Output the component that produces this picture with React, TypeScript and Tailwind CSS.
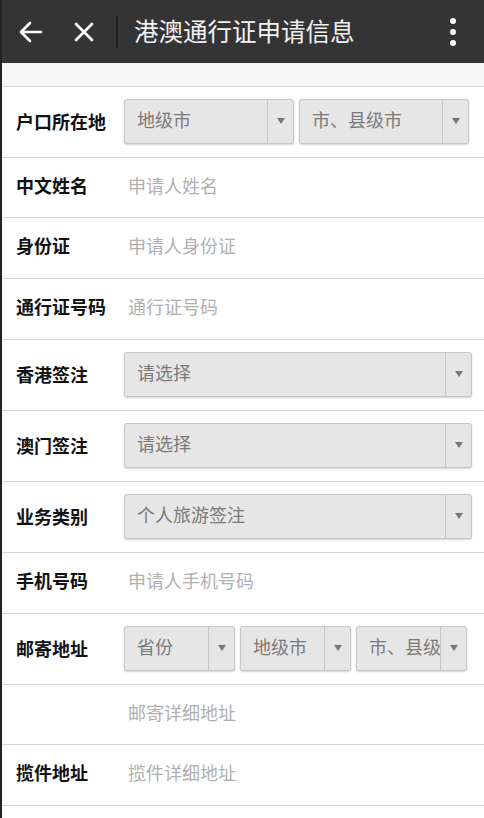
const font = { fontFamily: '"Noto Sans CJK SC", "Noto Sans", sans-serif' };

function Arrow() {
  return (
    <svg width="8" height="6" viewBox="0 0 8 6">
      <path d="M0 0 H8 L4 6 Z" fill="#777" />
    </svg>
  );
}

function Select({ text, className }: { text: string; className: string }) {
  return (
    <div
      className={`flex h-[45px] items-stretch overflow-hidden rounded-[3px] border border-[#c6c6c6] bg-[#e6e6e6] shadow-[0_1px_2px_rgba(0,0,0,0.18)] ${className}`}
    >
      <div className="flex flex-1 items-center overflow-hidden whitespace-nowrap pb-[3px] pl-3 text-[18px] text-[#7a7a7a]">
        {text}
      </div>
      <div className="flex w-[26px] shrink-0 items-center justify-center border-l border-[#c6c6c6]">
        <Arrow />
      </div>
    </div>
  );
}

function Label({ children }: { children?: string }) {
  return <div className="w-[110px] shrink-0 text-[18px] font-bold text-[#111]">{children}</div>;
}

function TextRow({ label, placeholder, short }: { label?: string; placeholder: string; short?: boolean }) {
  return (
    <div
      className={`flex items-center border-b border-[#d6d6d6] pb-[5px] pl-[14px] ${short ? "h-[60px]" : "h-[61px]"}`}
    >
      <Label>{label}</Label>
      <div className="ml-[2px] text-[18px] text-[#b0b0b0]">{placeholder}</div>
    </div>
  );
}

function SelectRow({ label, children }: { label: string; children: React.ReactNode }) {
  return (
    <div className="flex h-[71px] items-center border-b border-[#d6d6d6] pb-[2px] pl-[14px]">
      <Label>{label}</Label>
      <div className="-ml-[2px] flex gap-[5px]">{children}</div>
    </div>
  );
}

export default function App() {
  return (
    <div className="h-[818px] w-[484px] overflow-hidden border-l-2 border-[#222] bg-white" style={font}>
      <header className="flex h-[63px] items-center bg-[#343434] text-white">
        <div className="flex w-[41px] justify-end">
          <svg width="24" height="22" viewBox="0 0 24 22" fill="none" stroke="white" strokeWidth="2.6" strokeLinecap="round" strokeLinejoin="round">
            <path d="M22 11H3M11 2 2 11l9 9" />
          </svg>
        </div>
        <div className="ml-[31px] flex w-[20px] justify-center">
          <svg width="20" height="20" viewBox="0 0 20 20" stroke="white" strokeWidth="2.6" strokeLinecap="round">
            <path d="M2 2l16 16M18 2 2 18" />
          </svg>
        </div>
        <div className="ml-[22px] h-[32px] w-[2px] bg-[#1f1f1f]" />
        <div className="ml-[16px] flex-1 text-[24.5px] text-[#f2f2f2]">港澳通行证申请信息</div>
        <div className="mr-[28px] flex flex-col gap-[5px]">
          <div className="h-[6px] w-[6px] rounded-full bg-white" />
          <div className="h-[6px] w-[6px] rounded-full bg-white" />
          <div className="h-[6px] w-[6px] rounded-full bg-white" />
        </div>
      </header>
      <div className="h-[24px] border-b border-[#d6d6d6] bg-[#f6f6f6]" />
      <SelectRow label="户口所在地">
        <Select text="地级市" className="w-[170px]" />
        <Select text="市、县级市" className="w-[170px]" />
      </SelectRow>
      <TextRow label="中文姓名" placeholder="申请人姓名" short />
      <TextRow label="身份证" placeholder="申请人身份证" />
      <TextRow label="通行证号码" placeholder="通行证号码" />
      <SelectRow label="香港签注">
        <Select text="请选择" className="w-[348px]" />
      </SelectRow>
      <SelectRow label="澳门签注">
        <Select text="请选择" className="w-[348px]" />
      </SelectRow>
      <SelectRow label="业务类别">
        <Select text="个人旅游签注" className="w-[348px]" />
      </SelectRow>
      <TextRow label="手机号码" placeholder="申请人手机号码" />
      <SelectRow label="邮寄地址">
        <Select text="省份" className="w-[111px]" />
        <Select text="地级市" className="w-[111px]" />
        <Select text="市、县级市" className="w-[111px]" />
      </SelectRow>
      <TextRow placeholder="邮寄详细地址" short />
      <TextRow label="揽件地址" placeholder="揽件详细地址" />
    </div>
  );
}
